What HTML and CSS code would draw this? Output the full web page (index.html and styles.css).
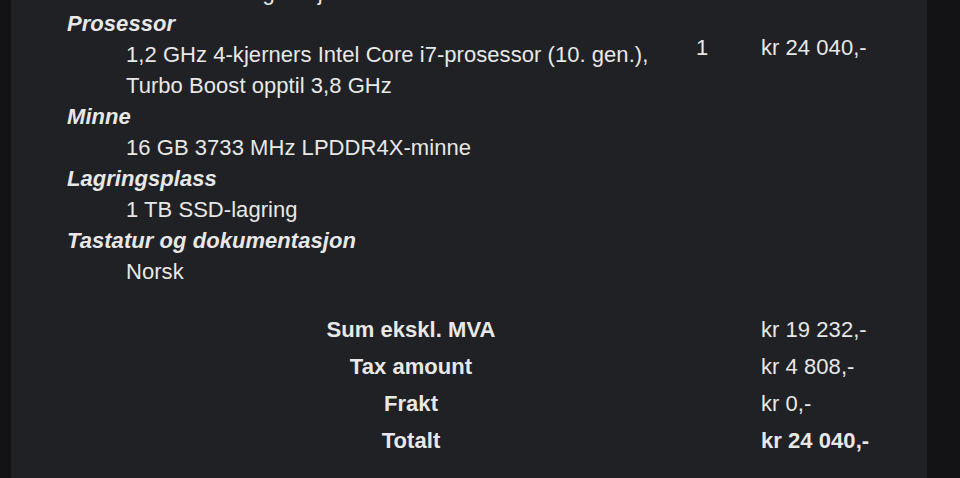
FILE: index.html
```html
<!DOCTYPE html>
<html lang="no">
<head>
<meta charset="utf-8">
<title>Ordre</title>
<link rel="stylesheet" href="styles.css">
</head>
<body>
<div class="page">
  <div class="panel">
    <div class="order">
      <div class="desc">
        <div class="opt">Standardkonfigurasjon</div>
        <div class="lbl">Prosessor</div>
        <div class="opt">1,2 GHz 4-kjerners Intel Core i7-prosessor (10. gen.),<br>Turbo Boost opptil 3,8 GHz</div>
        <div class="lbl">Minne</div>
        <div class="opt">16 GB 3733 MHz LPDDR4X-minne</div>
        <div class="lbl">Lagringsplass</div>
        <div class="opt">1 TB SSD-lagring</div>
        <div class="lbl">Tastatur og dokumentasjon</div>
        <div class="opt">Norsk</div>
      </div>
      <div class="qty">1</div>
      <div class="price">kr 24 040,-</div>

      <div class="tlabel first">Sum ekskl. MVA</div>
      <div class="tval first">kr 19 232,-</div>
      <div class="tlabel">Tax amount</div>
      <div class="tval">kr 4 808,-</div>
      <div class="tlabel">Frakt</div>
      <div class="tval">kr 0,-</div>
      <div class="tlabel">Totalt</div>
      <div class="tval total">kr 24 040,-</div>
    </div>
  </div>
</div>
</body>
</html>
```
FILE: styles.css
```css
html, body {
  margin: 0;
  padding: 0;
  background: #131316;
  height: 100%;
  overflow: hidden;
}
.page {
  padding-left: 11px;
  height: 100%;
}
.panel {
  width: 916px;
  height: 100%;
  background: #202124;
  color: #e8e8e8;
  font-family: "Liberation Sans", Arial, sans-serif;
  font-size: 22px;
  line-height: 31px;
  letter-spacing: 0.05px;
  overflow: hidden;
}
.order {
  margin-top: -23px;
  padding-left: 56px;
  display: grid;
  grid-template-columns: 624px 58px 1fr;
  column-gap: 6px;
  align-items: start;
}
.desc {
  grid-column: 1;
}
.lbl {
  font-weight: bold;
  font-style: italic;
}
.opt {
  padding-left: 59px;
}
.qty {
  grid-column: 2;
  margin-top: 55px;
  margin-left: -1px;
}
.price {
  grid-column: 3;
  margin-top: 55px;
}
.tlabel {
  grid-column: 1 / span 2;
  text-align: center;
  font-weight: bold;
  padding: 3px 0;
}
.tval {
  grid-column: 3;
  padding: 3px 0;
}
.tlabel.first, .tval.first {
  margin-top: 24px;
}
.total {
  font-weight: bold;
}
```
